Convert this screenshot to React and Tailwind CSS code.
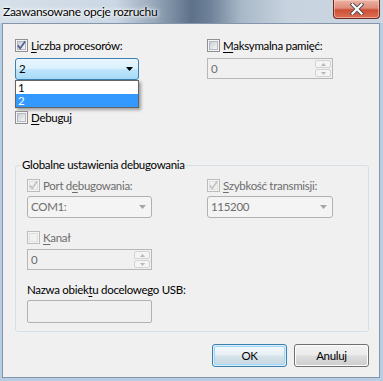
import React from 'react'

const font = "font-['Lato','Liberation_Sans',sans-serif]"

function Check({ checked, disabled }) {
  return (
    <span className={`relative flex w-[13px] h-[13px] shrink-0 border p-[1px] bg-[#f4f4f4] ${disabled ? 'border-[#bcbcbc]' : 'border-[#8e8f8f]'}`}>
      <span className={`flex-1 border ${disabled ? 'border-[#e0e0e0] bg-[#f1f1f1]' : 'border-[#b4b9bf] bg-[linear-gradient(135deg,#c9cdd3,#f7f7f7)]'}`} />
      {checked && (
        <svg className="absolute left-0 top-0" width="11" height="11" viewBox="0 0 11 11">
          <path d="M1.8 5.4 L4.2 8.4 L9.2 1.2" fill="none" stroke={disabled ? '#c2c2c2' : '#4b5f94'} strokeWidth="1.7" />
        </svg>
      )}
    </span>
  )
}

function CheckRow({ checked, disabled, children }) {
  return (
    <div className="flex items-center h-[13px]">
      <Check checked={checked} disabled={disabled} />
      <span className={`ml-[3px] leading-[13px] whitespace-nowrap ${disabled ? 'text-[#6d6d6d]' : 'text-black'}`}>{children}</span>
    </div>
  )
}

function Arrow({ color }) {
  return (
    <svg width="7" height="4" viewBox="0 0 7 4"><path d="M0 0 H7 L3.5 4 Z" fill={color} /></svg>
  )
}

function DisabledCombo({ value, w }) {
  return (
    <div className={`${w} h-[22px] flex items-center border border-[#adb2b5] rounded-[3px] bg-[#f4f4f4] pl-[3px] pr-[5px]`}>
      <span className="flex-1 text-[#6d6d6d]">{value}</span>
      <Arrow color="#a5a5a5" />
    </div>
  )
}

function SpinBtn({ up }) {
  return (
    <div className="h-[8px] w-[16px] flex items-center justify-center border border-[#d3d3d3] rounded-[2px] bg-[#f4f4f4]">
      <svg width="5" height="3" viewBox="0 0 5 3"><path d={up ? 'M0 3 H5 L2.5 0 Z' : 'M0 0 H5 L2.5 3 Z'} fill="#b8b8b8" /></svg>
    </div>
  )
}

function Spin({ w }) {
  return (
    <div className={`${w} h-[21px] flex items-center border border-[#b7b7b7] bg-[#f0f0f0] pl-[3px] pr-[1px]`}>
      <span className="flex-1 text-[#6d6d6d]">0</span>
      <div className="flex flex-col gap-[1px]">
        <SpinBtn up />
        <SpinBtn />
      </div>
    </div>
  )
}

export default function App() {
  return (
    <div className={`${font} text-[11.5px] tracking-[-0.3px] w-[383px] h-[381px] flex flex-col bg-[#b9cde2] text-black overflow-hidden`}>
      <div className="h-[23px] shrink-0 flex items-start bg-[linear-gradient(90deg,#d6e0ea_0%,#cbd7e4_30%,#98a9bb_40%,#5d7189_50%,#6f8299_55%,#a9b8c8_63%,#c7d3df_75%,#cbd6e2_100%)]">
        <span className="pl-[3px] pt-[4px] text-[12px] leading-[16px] text-black [text-shadow:0_0_6px_#fff,0_0_4px_#fff,0_0_2px_#fff]">Zaawansowane opcje rozruchu</span>
        <div className="ml-auto mr-[3px] w-[47px] h-[19px] flex items-center justify-center rounded-b-[4px] border border-t-0 border-[#6b2a1e] bg-[linear-gradient(180deg,#ecb3a4_0%,#dd8c7a_45%,#cc4f35_55%,#dc7054_100%)] shadow-[inset_0_0_0_1px_rgba(255,220,210,0.5)]">
          <svg width="14" height="12" viewBox="0 0 14 12">
            <path d="M2.5 1.5 L11.5 10.5 M11.5 1.5 L2.5 10.5" stroke="#4a4a4a" strokeWidth="4" strokeLinecap="square" />
            <path d="M2.5 1.5 L11.5 10.5 M11.5 1.5 L2.5 10.5" stroke="#ffffff" strokeWidth="2.2" strokeLinecap="square" />
          </svg>
        </div>
      </div>
      <div className="flex-1 flex pl-[2px] pr-[3px] pb-[3px]">
        <div className="flex-1 flex flex-col border border-[#8496ab] bg-[#f0f0f0]">
          <div className="flex">
            <div className="ml-[12px] w-[124px] pt-[15px]">
              <CheckRow checked>
                <span className="underline underline-offset-2">L</span>iczba procesorów:
              </CheckRow>
              <div className="relative mt-[6px]">
                <div className="h-[22px] flex items-center border border-[#3c7fb1] rounded-[3px] bg-[linear-gradient(180deg,#eaf6fd_0%,#d9f0fc_48%,#bee6fd_52%,#a7d9f5_100%)] pl-[3px] pr-[5px]">
                  <span className="flex-1 text-black">2</span>
                  <Arrow color="#000" />
                </div>
                <div className="absolute left-0 top-[22px] w-[124px] border border-[#646464] bg-white shadow-[2px_2px_3px_rgba(0,0,0,0.35)]">
                  <div className="h-[13px] leading-[13px] pl-[2px] text-black">1</div>
                  <div className="h-[13px] leading-[13px] pl-[2px] bg-[#3399ff] text-white">2</div>
                </div>
              </div>
              <div className="mt-[31px]">
                <CheckRow>
                  <span className="underline underline-offset-2">D</span>ebuguj
                </CheckRow>
              </div>
            </div>
            <div className="ml-[68px] w-[126px] pt-[15px]">
              <CheckRow>
                <span className="underline underline-offset-2">M</span>aksymalna pamięć:
              </CheckRow>
              <div className="mt-[6px]">
                <Spin w="w-[126px]" />
              </div>
            </div>
          </div>

          <fieldset className="ml-[12px] mt-[33px] w-[354px] border border-[#d5dfe5] rounded-[3px]">
            <legend className="ml-[5px] px-[1px] leading-[16px] text-black">Globalne ustawienia debugowania</legend>
            <div className="flex pl-[11px] pt-[6px] pb-[8px]">
              <div className="w-[125px]">
                <CheckRow checked disabled>
                  Port d<span className="underline underline-offset-2">e</span>bugowania:
                </CheckRow>
                <div className="mt-[4px]">
                  <DisabledCombo value="COM1:" w="w-[125px]" />
                </div>
                <div className="mt-[13px]">
                  <CheckRow disabled>
                    <span className="underline underline-offset-2">K</span>anał
                  </CheckRow>
                </div>
                <div className="mt-[5px]">
                  <Spin w="w-[125px]" />
                </div>
                <div className="mt-[12px] leading-[16px] whitespace-nowrap text-black">
                  Nazwa obiek<span className="underline underline-offset-2">t</span>u docelowego USB:
                </div>
                <div className="mt-[2px] w-[125px] h-[23px] border border-[#adb2b5] rounded-[2px] bg-[#f0f0f0]" />
              </div>
              <div className="ml-[55px] w-[126px]">
                <CheckRow checked disabled>
                  <span className="underline underline-offset-2">S</span>zybkość transmisji:
                </CheckRow>
                <div className="mt-[4px]">
                  <DisabledCombo value="115200" w="w-[126px]" />
                </div>
              </div>
            </div>
          </fieldset>

          <div className="flex justify-end gap-[7px] mt-[12px] mr-[10px]">
            <button className="w-[75px] h-[23px] rounded-[3px] border border-[#3c7fb1] p-[1px] bg-[#dceefa]">
              <div className="h-full rounded-[2px] border border-[#9fd8f7] bg-[linear-gradient(180deg,#f2f7fa_0%,#e7eff4_48%,#d6e3ea_52%,#c9d9e2_100%)] flex items-center justify-center text-black">OK</div>
            </button>
            <button className="w-[75px] h-[23px] rounded-[3px] border border-[#707070] p-[1px] bg-[#fcfcfc]">
              <div className="h-full rounded-[2px] bg-[linear-gradient(180deg,#f2f2f2_0%,#ebebeb_48%,#dddddd_52%,#cfcfcf_100%)] flex items-center justify-center text-black">Anuluj</div>
            </button>
          </div>
        </div>
      </div>
    </div>
  )
}
